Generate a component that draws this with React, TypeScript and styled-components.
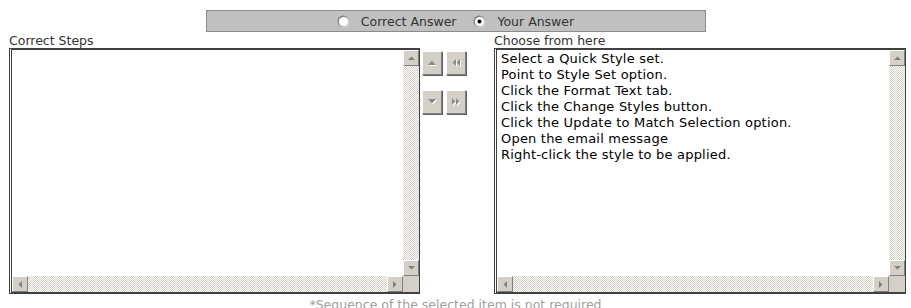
import React from "react";
import styled, { createGlobalStyle } from "styled-components";

const GlobalStyle = createGlobalStyle`
  html, body { margin: 0; padding: 0; background: #fff; }
  body { font-family: "DejaVu Sans", Verdana, sans-serif; }
`;

const Page = styled.div`
  width: 911px;
  height: 308px;
  overflow: hidden;
  box-sizing: border-box;
`;

const TopRow = styled.div`
  display: flex;
  justify-content: center;
  padding-top: 10px;
`;

const ModeBar = styled.div`
  box-sizing: border-box;
  width: 500px;
  height: 22px;
  background: #c0c0c0;
  border: 1px solid #8c8c8c;
  display: flex;
  align-items: center;
  justify-content: center;
  gap: 17px;
  font-size: 12.5px;
  color: #333;
`;

const RadioOption = styled.label`
  display: flex;
  align-items: center;
  gap: 11px;
  line-height: 14px;
  padding-top: 1px;
`;

const Main = styled.div`
  display: flex;
  padding-left: 9px;
  margin-top: 2px;
`;

const Column = styled.div<{ $w: number }>`
  display: flex;
  flex-direction: column;
  width: ${(p) => p.$w}px;
`;

const Label = styled.div`
  height: 14px;
  font-size: 12.5px;
  line-height: 14px;
  color: #333;
`;

const ListBox = styled.div`
  box-sizing: border-box;
  height: 246px;
  display: grid;
  grid-template-columns: 1fr 16px;
  grid-template-rows: 1fr 16px;
  border-top: 2px solid #404040;
  border-left: 3px double #404040;
  border-right: 1px solid #404040;
  border-bottom: 2px solid #404040;
  background: #fff;
`;

const ListContent = styled.div`
  padding: 1px 4px;
  font-size: 13px;
  letter-spacing: 0.2px;
  line-height: 16px;
  color: #000;
  white-space: nowrap;
  overflow: hidden;
`;

const Track = styled.div`
  flex: 1;
  background-color: #fff;
  background-image: repeating-conic-gradient(#d4d0c8 0% 25%, #fff 0% 50%);
  background-size: 2px 2px;
`;

const VScroll = styled.div`
  display: flex;
  flex-direction: column;
`;

const HScroll = styled.div`
  display: flex;
`;

const Corner = styled.div`
  background: #d4d0c8;
`;

const ScrollButton = styled.div`
  box-sizing: border-box;
  width: 16px;
  height: 16px;
  flex: none;
  background: #d4d0c8;
  border-top: 1px solid #fff;
  border-left: 1px solid #fff;
  border-right: 1px solid #808080;
  border-bottom: 1px solid #808080;
  display: flex;
  align-items: center;
  justify-content: center;
`;

const MoveColumn = styled.div`
  width: 74px;
  padding-left: 2px;
  padding-top: 17px;
  box-sizing: border-box;
`;

const MoveGrid = styled.div`
  display: grid;
  grid-template-columns: 20px 20px;
  grid-template-rows: 24px 24px;
  column-gap: 4px;
  row-gap: 15px;
`;

const MoveButton = styled.button`
  box-sizing: border-box;
  width: 20px;
  height: 24px;
  padding: 0;
  margin: 0;
  background: #d4d0c8;
  border-top: 1px solid #fff;
  border-left: 1px solid #fff;
  border-right: 1px solid #808080;
  border-bottom: 1px solid #808080;
  box-shadow: 1px 1px 0 #606060;
  display: flex;
  align-items: center;
  justify-content: center;
`;

const Footer = styled.div`
  text-align: center;
  margin-top: 4px;
  font-size: 12.5px;
  line-height: 14px;
  color: #a0a0a0;
`;

type Dir = "up" | "down" | "left" | "right";

const Tri = ({ dir, color = "#808080" }: { dir: Dir; color?: string }) => {
  const pts: Record<Dir, string> = {
    up: "0,4 7,4 3.5,0.5",
    down: "0,0 7,0 3.5,3.5",
    left: "4,0 4,7 0.5,3.5",
    right: "0,0 0,7 3.5,3.5",
  };
  const horiz = dir === "up" || dir === "down";
  return (
    <svg width={horiz ? 7 : 4} height={horiz ? 4 : 7} viewBox={horiz ? "0 0 7 4" : "0 0 4 7"}>
      <polygon points={pts[dir]} fill={color} />
    </svg>
  );
};

const DoubleTri = ({ dir }: { dir: "left" | "right" }) => (
  <svg width="9" height="8" viewBox="0 0 9 8">
    {dir === "left" ? (
      <g>
        <polygon points="5,1 5,8 1.5,4.5" fill="#fff" />
        <polygon points="9,1 9,8 5.5,4.5" fill="#fff" />
        <polygon points="4,0 4,7 0.5,3.5" fill="#8a8a8a" />
        <polygon points="8,0 8,7 4.5,3.5" fill="#8a8a8a" />
      </g>
    ) : (
      <g>
        <polygon points="1,1 1,8 4.5,4.5" fill="#fff" />
        <polygon points="5,1 5,8 8.5,4.5" fill="#fff" />
        <polygon points="0,0 0,7 3.5,3.5" fill="#8a8a8a" />
        <polygon points="4,0 4,7 7.5,3.5" fill="#8a8a8a" />
      </g>
    )}
  </svg>
);

const SingleTri = ({ dir }: { dir: "up" | "down" }) => (
  <svg width="9" height="6" viewBox="0 0 9 6">
    {dir === "up" ? (
      <g>
        <polygon points="1,6 9,6 5,1.5" fill="#fff" />
        <polygon points="0,5 8,5 4,0.5" fill="#8a8a8a" />
      </g>
    ) : (
      <g>
        <polygon points="1,1 9,1 5,5.5" fill="#fff" />
        <polygon points="0,0 8,0 4,4.5" fill="#8a8a8a" />
      </g>
    )}
  </svg>
);

const Radio = ({ checked }: { checked?: boolean }) => (
  <svg width="13" height="13" viewBox="0 0 13 13">
    <defs>
      <linearGradient id={checked ? "rg1" : "rg0"} x1="0" y1="0" x2="1" y2="1">
        <stop offset="0" stopColor="#5a5a5a" />
        <stop offset="1" stopColor="#f0f0f0" />
      </linearGradient>
    </defs>
    <circle cx="6.5" cy="6.5" r="6" fill={`url(#${checked ? "rg1" : "rg0"})`} />
    <circle cx="6.5" cy="6.5" r="4.6" fill="#fff" />
    {checked && <circle cx="6.5" cy="6.5" r="2" fill="#000" />}
  </svg>
);

const ScrollList = ({ items }: { items: string[] }) => (
  <ListBox>
    <ListContent>
      {items.map((t) => (
        <div key={t}>{t}</div>
      ))}
    </ListContent>
    <VScroll>
      <ScrollButton>
        <Tri dir="up" />
      </ScrollButton>
      <Track />
      <ScrollButton>
        <Tri dir="down" />
      </ScrollButton>
    </VScroll>
    <HScroll>
      <ScrollButton>
        <Tri dir="left" />
      </ScrollButton>
      <Track />
      <ScrollButton>
        <Tri dir="right" />
      </ScrollButton>
    </HScroll>
    <Corner />
  </ListBox>
);

const choices = [
  "Select a Quick Style set.",
  "Point to Style Set option.",
  "Click the Format Text tab.",
  "Click the Change Styles button.",
  "Click the Update to Match Selection option.",
  "Open the email message",
  "Right-click the style to be applied.",
];

export default function App() {
  return (
    <Page>
      <GlobalStyle />
      <TopRow>
        <ModeBar>
          <RadioOption>
            <Radio />
            Correct Answer
          </RadioOption>
          <RadioOption>
            <Radio checked />
            Your Answer
          </RadioOption>
        </ModeBar>
      </TopRow>
      <Main>
        <Column $w={411}>
          <Label>Correct Steps</Label>
          <ScrollList items={[]} />
        </Column>
        <MoveColumn>
          <MoveGrid>
            <MoveButton>
              <SingleTri dir="up" />
            </MoveButton>
            <MoveButton>
              <DoubleTri dir="left" />
            </MoveButton>
            <MoveButton>
              <SingleTri dir="down" />
            </MoveButton>
            <MoveButton>
              <DoubleTri dir="right" />
            </MoveButton>
          </MoveGrid>
        </MoveColumn>
        <Column $w={412}>
          <Label>Choose from here</Label>
          <ScrollList items={choices} />
        </Column>
      </Main>
      <Footer>*Sequence of the selected item is not required</Footer>
    </Page>
  );
}
